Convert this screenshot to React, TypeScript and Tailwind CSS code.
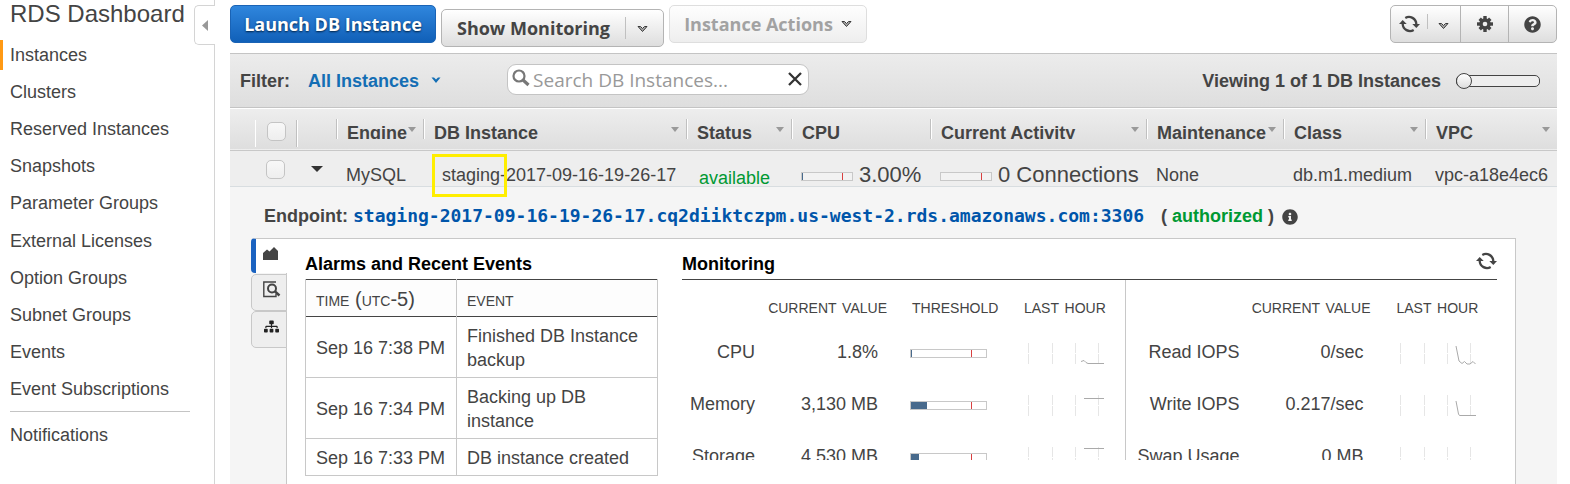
import React from "react";
import { FaInfoCircle, FaQuestionCircle, FaSitemap } from "react-icons/fa";

const navItems = [
  "Instances",
  "Clusters",
  "Reserved Instances",
  "Snapshots",
  "Parameter Groups",
  "External Licenses",
  "Option Groups",
  "Subnet Groups",
  "Events",
  "Event Subscriptions",
];

const events = [
  { time: "Sep 16 7:38 PM", event: "Finished DB Instance backup" },
  { time: "Sep 16 7:34 PM", event: "Backing up DB instance" },
  { time: "Sep 16 7:33 PM", event: "DB instance created" },
];

const resourceMetrics = [
  { label: "CPU", value: "1.8%", used: 1, line: "M54 19.500 L57 18.500 L59 20.500 L61 21.500 H77" },
  { label: "Memory", value: "3,130 MB", used: 16, line: "M57 4.5 H77" },
  { label: "Storage", value: "4,530 MB", used: 8, line: "M57 2.5 H77" },
];

const ioMetrics = [
  { label: "Read IOPS", value: "0/sec", line: "M57 4 L60 19 L63 21.500 L65.500 19.500 L68 22 H71 L74 19.500 L76.500 22" },
  { label: "Write IOPS", value: "0.217/sec", line: "M57 7 L59.500 20 L60.500 21.500 H77" },
  { label: "Swap Usage", value: "0 MB", line: "" },
];

function Chevron({ className }: { className: string }) {
  return (
    <svg width="10" height="7" viewBox="0 0 10 7" className={className} aria-hidden="true">
      <path d="M0.500 0.500 H3 L5 2.500 L7 0.500 H9.500 L5 6 Z" fill="currentColor" />
    </svg>
  );
}

function ButtonChevron() {
  return (
    <svg width="11" height="8" viewBox="0 0 11 8" aria-hidden="true">
      <path d="M1 1.500 H3.500 L5.500 3.500 L7.500 1.500 H10 L5.500 6.500 Z" fill="#aaa" stroke="#3a3a3a" strokeWidth="1" />
    </svg>
  );
}

function RefreshIcon() {
  return (
    <svg width="21" height="18" viewBox="0 0 21 18" aria-hidden="true">
      <path d="M6.300 3 A7.300 7.300 0 0 1 17.300 9" fill="none" stroke="#444" strokeWidth="2.300" />
      <path d="M14.700 15 A7.300 7.300 0 0 1 3.700 9" fill="none" stroke="#444" strokeWidth="2.300" />
      <path d="M13.300 9 H21 L17.300 13 Z" fill="#444" />
      <path d="M0 9 H7.700 L3.700 5 Z" fill="#444" />
    </svg>
  );
}

function GearIcon() {
  return (
    <svg width="16" height="16" viewBox="0 0 16 16" fill="#444" aria-hidden="true">
      <rect x="6.300" y="0" width="3.400" height="16" />
      <rect x="0" y="6.300" width="16" height="3.400" />
      <rect x="6.300" y="0.500" width="3.400" height="15" transform="rotate(45 8 8)" />
      <rect x="6.300" y="0.500" width="3.400" height="15" transform="rotate(-45 8 8)" />
      <circle cx="8" cy="8" r="5.700" />
      <circle cx="8" cy="8" r="2.300" fill="#eee" />
    </svg>
  );
}

function SortArrow() {
  return (
    <svg width="8" height="5" viewBox="0 0 8 5" className="absolute right-[7px] top-2" aria-hidden="true">
      <path d="M0 0 H8 L4 5 Z" fill="#999" />
    </svg>
  );
}

function HeaderCell({ children, sortable = false }: { children: string; sortable?: boolean }) {
  return (
    <th scope="col" className="p-0 text-left align-top font-bold">
      <div className="relative mt-[11px] h-5 overflow-hidden whitespace-nowrap border-l border-[#c0c0c0] pl-2.5 leading-[28px] shadow-[inset_1px_0_0_#fff]">
        {children}
        {sortable && <SortArrow />}
      </div>
    </th>
  );
}

function Tick({ label }: { label: string }) {
  return (
    <input
      type="checkbox"
      aria-label={label}
      className="block size-[19px] appearance-none rounded-[5px] border border-[#c4c4c4] bg-linear-to-b from-[#f8f8f8] to-[#eee]"
    />
  );
}

function Meter({ used, wide = false }: { used: number; wide?: boolean }) {
  return (
    <svg
      width={wide ? 77 : 52}
      height="9"
      className="block shrink-0"
      role="img"
      aria-label="Usage against threshold"
    >
      <rect x="0.500" y="0.500" width={wide ? 76 : 51} height="8" fill={wide ? "#fff" : "#f2f2f2"} stroke="#c8c8c8" />
      <rect x="1" y="1" width={used} height="7" fill="#486a8c" />
      <rect x={wide ? 61 : 41} y="1" width="1" height="7" fill="#d84040" />
    </svg>
  );
}

function Sparkline({ line }: { line: string }) {
  return (
    <svg width="80" height="24" viewBox="0 0 80 24" className="block" role="img" aria-label="Last hour">
      <path d="M1.500 1 V22 M25.500 1 V22 M48.500 1 V22 M71.500 1 V22" stroke="#e6e6e6" strokeDasharray="10 1" />
      <path d={line} fill="none" stroke="#aaa" />
    </svg>
  );
}

export default function App() {
  return (
    <div className="flex min-h-screen overflow-hidden bg-white font-['Liberation_Sans',Arial,sans-serif] text-[18px] leading-6 text-[#444]">
      <nav className="relative w-[215px] shrink-0 border-r border-[#d4d4d4]">
        <h1 className="pl-2.5 text-[24px] leading-7">
          <a href="#dashboard">RDS Dashboard</a>
        </h1>
        <ul className="mt-3 flex h-[364px] flex-col justify-between">
          {navItems.map((item, i) => (
            <li key={item}>
              <a
                href="#nav"
                className={
                  i === 0
                    ? "block border-l-3 border-[#ff9914] pl-[7px] leading-[30px]"
                    : "block pl-2.5 leading-[30px]"
                }
              >
                {item}
              </a>
            </li>
          ))}
        </ul>
        <div className="ml-2.5 mr-6 mt-[7px] border-t border-[#c4c4c4] pt-2">
          <a href="#notifications" className="block leading-[30px]">
            Notifications
          </a>
        </div>
        <button
          type="button"
          aria-label="Collapse navigation"
          className="absolute -right-px top-[5px] flex h-10 w-[21px] items-center rounded-l-[5px] border border-r-0 border-[#d4d4d4] bg-white pl-[7px]"
        >
          <svg width="6" height="11" viewBox="0 0 6 11" aria-hidden="true">
            <path d="M6 0 V11 L0 5.500 Z" fill="#999" />
          </svg>
        </button>
      </nav>

      <main className="flex min-w-0 flex-1 flex-col pl-[15px] pr-[13px]">
        <div className="flex h-[53px] items-start gap-[5px] pt-[5px] font-['Open_Sans','Noto_Sans',sans-serif] text-[18px] font-bold">
          <button
            type="button"
            className="h-[38px] w-[206px] rounded-[5px] border border-[#1a63b5] bg-linear-to-b from-[#2f86dd] to-[#1060b8] whitespace-nowrap text-white [text-shadow:0_1px_2px_#024]"
          >
            Launch DB Instance
          </button>
          <div className="mt-1 flex h-[38px] w-[223px] items-center rounded-[5px] border border-[#b4b4b4] bg-linear-to-b from-white to-[#dedede]">
            <button type="button" className="h-full flex-1 whitespace-nowrap">
              Show Monitoring
            </button>
            <button
              type="button"
              aria-label="Monitoring options"
              className="flex h-[22px] w-[38px] items-center justify-center border-l border-[#c0c0c0] pr-1 pt-0.5"
            >
              <ButtonChevron />
            </button>
          </div>
          <button
            type="button"
            disabled
            className="flex h-[38px] w-[198px] items-center justify-center gap-2 rounded-[5px] border border-[#dedede] bg-linear-to-b from-[#fefefe] to-[#eee] whitespace-nowrap text-[#a2a2a2]"
          >
            Instance Actions
            <ButtonChevron />
          </button>
          <div className="ml-auto flex h-[38px] rounded-[5px] border border-[#b4b4b4] bg-linear-to-b from-white to-[#dedede]">
            <button type="button" aria-label="Refresh" className="flex w-9 items-center justify-center">
              <RefreshIcon />
            </button>
            <button
              type="button"
              aria-label="Refresh options"
              className="mt-2 flex h-[15px] w-[33px] items-center justify-center border-l border-[#c0c0c0] pr-0.5 pt-2"
            >
              <ButtonChevron />
            </button>
            <button
              type="button"
              aria-label="Settings"
              className="flex w-12 items-center justify-center border-l border-[#b4b4b4]"
            >
              <GearIcon />
            </button>
            <button
              type="button"
              aria-label="Help"
              className="flex w-12 items-center justify-center border-l border-[#b4b4b4]"
            >
              <FaQuestionCircle size={17} />
            </button>
          </div>
        </div>

        <div className="flex h-[55px] items-center border-y border-[#c4c4c4] bg-linear-to-b from-[#ececec] to-[#dedede] px-2.5 font-bold">
          <span className="w-[68px]">Filter:</span>
          <button type="button" className="flex items-center gap-3 text-[#146eb4]">
            All Instances
            <Chevron className="text-[#146eb4]" />
          </button>
          <label className="mb-0.5 ml-[66px] flex h-[31px] w-[302px] items-center rounded-[9px] border border-[#c4c4c4] bg-white pl-1 pr-1.5">
            <svg width="18" height="18" viewBox="0 0 18 18" className="mb-1 shrink-0" aria-hidden="true">
              <circle cx="7" cy="7" r="5.500" fill="none" stroke="#777" strokeWidth="2.200" />
              <path d="M11 11 L16.500 16" stroke="#777" strokeWidth="3.200" />
            </svg>
            <input
              type="text"
              aria-label="Search DB Instances"
              placeholder="Search DB Instances..."
              className="ml-[3px] min-w-0 flex-1 bg-transparent font-['Open_Sans','Noto_Sans',sans-serif] text-[19px] font-normal leading-7 outline-none placeholder:text-[#999]"
            />
            <button type="button" aria-label="Clear search" className="mb-0.5 shrink-0">
              <svg width="14" height="14" viewBox="0 0 14 14" className="block" aria-hidden="true">
                <path d="M1 1 L13 13 M13 1 L1 13" stroke="#333" strokeWidth="2.300" />
              </svg>
            </button>
          </label>
          <label htmlFor="page" className="ml-auto">
            Viewing 1 of 1 DB Instances
          </label>
          <input
            id="page"
            type="range"
            min={0}
            max={1}
            defaultValue={0}
            className="ml-[15px] mr-[7px] h-3 w-[84px] appearance-none rounded-[5px] border border-[#444] bg-[#eee] [&::-webkit-slider-thumb]:-ml-px [&::-webkit-slider-thumb]:size-4 [&::-webkit-slider-thumb]:appearance-none [&::-webkit-slider-thumb]:rounded-full [&::-webkit-slider-thumb]:border [&::-webkit-slider-thumb]:border-[#444] [&::-webkit-slider-thumb]:bg-linear-to-b [&::-webkit-slider-thumb]:from-white [&::-webkit-slider-thumb]:to-[#ddd]"
          />
        </div>

        <table className="w-full table-fixed border-collapse">
          <colgroup>
            <col className="w-[25px]" />
            <col className="w-[42px]" />
            <col className="w-[39px]" />
            <col className="w-[87px]" />
            <col />
            <col className="w-[105px]" />
            <col className="w-[139px]" />
            <col className="w-[216px]" />
            <col className="w-[137px]" />
            <col className="w-[142px]" />
            <col className="w-[132px]" />
          </colgroup>
          <thead>
            <tr className="h-[42px] border-b border-[#c8c8c8] bg-linear-to-b from-[#eee] to-[#dedede] shadow-[inset_0_1px_0_#fff]">
              <td className="p-0" />
              <td className="p-0 align-top">
                <div className="mt-3 h-[27px] border-x border-l-white border-r-[#c0c0c0] pl-[11px] pt-0.5 shadow-[1px_0_0_#fff]">
                  <Tick label="Select all" />
                </div>
              </td>
              <td className="p-0" />
              <HeaderCell sortable>Engine</HeaderCell>
              <HeaderCell sortable>DB Instance</HeaderCell>
              <HeaderCell sortable>Status</HeaderCell>
              <HeaderCell>CPU</HeaderCell>
              <HeaderCell sortable>Current Activity</HeaderCell>
              <HeaderCell sortable>Maintenance</HeaderCell>
              <HeaderCell sortable>Class</HeaderCell>
              <HeaderCell sortable>VPC</HeaderCell>
            </tr>
          </thead>
          <tbody>
            <tr className="h-[35px] whitespace-nowrap border-b border-[#d8dde0] bg-[#eee] [&>td]:p-0 [&>td]:align-top">
              <td />
              <td>
                <div className="pl-[11px] pt-[9px]">
                  <Tick label="Select staging" />
                </div>
              </td>
              <td>
                <button type="button" aria-label="Toggle details" className="ml-[14px] block pt-[15px]">
                  <svg width="12" height="6" viewBox="0 0 12 6" className="block" aria-hidden="true">
                    <path d="M0 0 H12 L6 6 Z" fill="#333" />
                  </svg>
                </button>
              </td>
              <td>
                <div className="h-[35px] pl-2.5 pt-3">MySQL</div>
              </td>
              <td>
                <div className="relative h-[35px] pl-[19px] pt-3">
                  staging-2017-09-16-19-26-17
                  <span className="absolute left-[9px] top-[3px] h-[43px] w-[75px] border-3 border-[#ffee00]" />
                </div>
              </td>
              <td>
                <div className="h-[35px] pl-[13px] pt-[15px] text-[#009933]">available</div>
              </td>
              <td>
                <div className="flex h-[35px] items-center gap-1.5 pl-2.5 pt-[13px] text-[22px]">
                  <div className="pt-1">
                    <Meter used={1} />
                  </div>
                  3.00%
                </div>
              </td>
              <td>
                <div className="flex h-[35px] items-center gap-1.5 pl-2.5 pt-[13px] text-[22px]">
                  <div className="pt-1">
                    <Meter used={0} />
                  </div>
                  0 Connections
                </div>
              </td>
              <td>
                <div className="h-[35px] pl-2.5 pt-3">None</div>
              </td>
              <td>
                <div className="h-[35px] pl-2.5 pt-3">db.m1.medium</div>
              </td>
              <td>
                <div className="h-[35px] pl-2.5 pt-3">vpc-a18e4ec6</div>
              </td>
            </tr>
          </tbody>
        </table>

        <section className="flex flex-1 flex-col bg-[#f5f5f5] pl-[21px] pr-[41px]">
          <div className="flex h-[51px] items-center whitespace-nowrap pl-[13px] pt-2 font-bold">
            <span>Endpoint:</span>
            <a
              href="#endpoint"
              className="ml-[5px] font-['DejaVu_Sans_Mono',monospace] text-[18px] text-[#0055aa]"
            >
              staging-2017-09-16-19-26-17.cq2diiktczpm.us-west-2.rds.amazonaws.com:3306
            </a>
            <span className="ml-[17px]">
              ( <span className="text-[#009933]">authorized</span> )
            </span>
            <FaInfoCircle size={16} className="ml-2 mt-0.5" />
          </div>

          <div className="flex flex-1">
            <div className="z-10 -mr-px w-9">
              <button
                type="button"
                aria-label="Monitoring"
                className="flex h-[35px] w-full items-start rounded-l-[4px] border-l-5 border-t border-l-[#1a62c0] border-t-[#c8c8c8] bg-white pl-[7px] pt-2"
              >
                <svg width="15" height="13" viewBox="0 0 15 13" aria-hidden="true">
                  <path d="M0 13 V6 L4 2.500 L6.500 4.500 L11 0 L15 4 V13 Z" fill="#444" />
                </svg>
              </button>
              <button
                type="button"
                aria-label="Logs"
                className="mt-px flex h-[37px] w-full items-start rounded-l-[5px] border border-[#c8c8c8] bg-[#eee] pl-[11px] pt-1.5"
              >
                <svg width="18" height="17" viewBox="0 0 18 17" fill="none" stroke="#444" aria-hidden="true">
                  <path d="M13 1 H0.800 V15.500 H13 V13" strokeWidth="1.400" />
                  <circle cx="9" cy="7.500" r="4" strokeWidth="2" />
                  <path d="M12 10.500 L16.500 14.500" strokeWidth="2.500" />
                </svg>
              </button>
              <button
                type="button"
                aria-label="Topology"
                className="flex h-[37px] w-full items-start rounded-l-[5px] border border-[#c8c8c8] bg-[#eee] pl-3 pt-[7px]"
              >
                <FaSitemap size={15} color="#222" />
              </button>
            </div>

            <div className="flex flex-1 items-start border border-b-0 border-[#c8c8c8] bg-white pl-[18px] pr-[18px] pt-[13px]">
              <section className="w-[353px] shrink-0">
                <h2 className="h-[27px] font-bold text-black">Alarms and Recent Events</h2>
                <table className="w-full table-fixed border-collapse">
                  <colgroup>
                    <col className="w-[151px]" />
                    <col />
                  </colgroup>
                  <thead>
                    <tr className="h-[37px] border-y border-[#444] bg-[#fdfdfd] text-left text-[20px] [font-variant:small-caps]">
                      <th scope="col" className="border-x border-x-[#c8c8c8] px-2.5 pb-0 pt-0.5 font-normal">
                        time (utc-5)
                      </th>
                      <th scope="col" className="border-x border-x-[#c8c8c8] px-2.5 pb-0 pt-0.5 font-normal">
                        event
                      </th>
                    </tr>
                  </thead>
                  <tbody>
                    {events.map((row) => (
                      <tr key={row.time} className="border-b border-[#c8c8c8]">
                        <td className="whitespace-nowrap border-x border-[#c8c8c8] px-2.5 pb-[5px] pt-[7px]">{row.time}</td>
                        <td className="border-x border-[#c8c8c8] px-2.5 pb-[5px] pt-[7px]">{row.event}</td>
                      </tr>
                    ))}
                  </tbody>
                </table>
              </section>

              <section className="ml-6 min-w-0 flex-1">
                <div className="flex h-7 items-start justify-between border-b border-[#444]">
                  <h2 className="font-bold text-black">Monitoring</h2>
                  <button type="button" aria-label="Refresh monitoring">
                    <RefreshIcon />
                  </button>
                </div>
                <div className="flex h-[180px] items-start overflow-hidden whitespace-nowrap">
                  <table className="w-[443px] shrink-0 table-fixed border-collapse text-right">
                    <colgroup>
                      <col className="w-[84px]" />
                      <col className="w-[133px]" />
                      <col className="w-[114px]" />
                      <col />
                    </colgroup>
                    <thead>
                      <tr className="h-[46px] text-[20px] [font-variant:small-caps] [&>th]:pt-1.5 [&>th]:font-normal">
                        <td />
                        <th scope="col" className="pr-3">current value</th>
                        <th scope="col" className="pl-[13px] text-left">threshold</th>
                        <th scope="col" className="pl-[11px] text-left">last hour</th>
                      </tr>
                    </thead>
                    <tbody>
                      {resourceMetrics.map((m) => (
                        <tr key={m.label} className="h-[52px]">
                          <th scope="row" className="p-0 pr-[11px] text-right font-normal">{m.label}</th>
                          <td className="p-0 pr-[21px]">{m.value}</td>
                          <td className="p-0 pl-[11px] pt-[3px]">
                            <Meter used={m.used} wide />
                          </td>
                          <td className="p-0 pl-[14px] pt-[5px]">
                            <Sparkline line={m.line} />
                          </td>
                        </tr>
                      ))}
                    </tbody>
                  </table>
                  <table className="min-w-0 flex-1 table-fixed border-collapse border-l border-[#c8c8c8] text-right">
                    <colgroup>
                      <col className="w-[126px]" />
                      <col className="w-[133px]" />
                      <col />
                    </colgroup>
                    <thead>
                      <tr className="h-[46px] text-[20px] [font-variant:small-caps] [&>th]:pt-1.5 [&>th]:font-normal">
                        <td />
                        <th scope="col" className="pr-[14px]">current value</th>
                        <th scope="col" className="pl-3 text-left">last hour</th>
                      </tr>
                    </thead>
                    <tbody>
                      {ioMetrics.map((m) => (
                        <tr key={m.label} className="h-[52px]">
                          <th scope="row" className="p-0 pr-3 text-right font-normal">{m.label}</th>
                          <td className="p-0 pr-[21px]">{m.value}</td>
                          <td className="p-0 pl-[14px] pt-[5px]">
                            <Sparkline line={m.line} />
                          </td>
                        </tr>
                      ))}
                    </tbody>
                  </table>
                </div>
              </section>
            </div>
          </div>
        </section>
      </main>
    </div>
  );
}
